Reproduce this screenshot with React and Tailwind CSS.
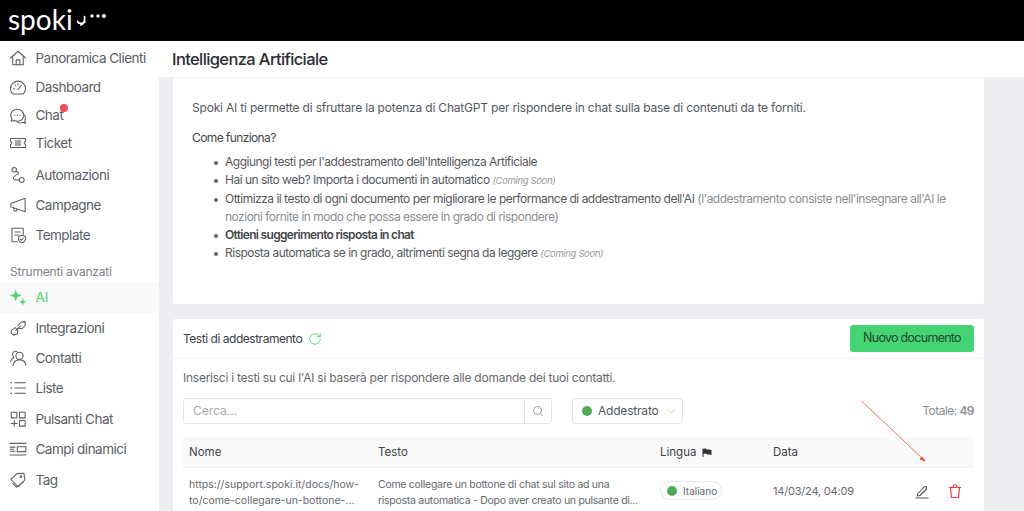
import React from "react";
import { Search, ChevronDown, RotateCw } from "lucide-react";

const S = ({ children, size = 18, sw = 1.4, fill = "none" }) => (
  <svg width={size} height={size} viewBox="0 0 24 24" fill={fill} stroke={fill === "none" ? "currentColor" : "none"} strokeWidth={sw} strokeLinecap="round" strokeLinejoin="round" className="shrink-0">
    {children}
  </svg>
);

const Icons = {
  home: () => <S><path d="M2 12 L12 3 L22 12" /><path d="M5 10 V21 H19 V10" /><path d="M9.5 21 V14.5 H14.5 V21" /></S>,
  gauge: () => <S><path d="M5 20 A10 10 0 1 1 19 20 Z" /><path d="M12 14 L16.5 8.5" /><path d="M6 13 H7.5 M8 8 L9 9 M12 6 V7.5" /></S>,
  chat: () => <S><path d="M11 3 C6 3 2.5 6.5 2.5 11 C2.5 13 3 14.500 4 16 L3 19 L7 18 C8.200 18.700 9.500 19 11 19 C16 19 19.500 15.500 19.500 11 C19.500 6.500 16 3 11 3 Z" /><path d="M20 10 C22 12 22.500 16 21 18 L22 21.500 L18 20.500 C16 21.500 13 21.500 11 20.500" /><path d="M7.500 11 H7.600 M11 11 H11.100 M14.500 11 H14.600" /></S>,
  ticket: () => <S><path d="M2 6 H22 V9.500 L20 12 L22 14.500 V18 H2 V14.500 L4 12 L2 9.500 Z" /><path d="M8 8 H16 V16 H8 Z" fill="currentColor" fillOpacity="0.55" stroke="none" /></S>,
  auto: () => <S><circle cx="7" cy="5" r="3" /><circle cx="17" cy="18.500" r="3.200" /><path d="M9.500 7 C13 9 14 10 11 11.500 C7 13 5 14 6 17 C7 19 10 19 13.800 18.500" /></S>,
  mega: () => <S><path d="M2.500 10 V14.500 L21.500 21 V3 Z" /><path d="M6 15.500 L7 20 H10.500 L10 17" /></S>,
  tpl: () => <S><path d="M11 21 H4 V3 H19 V11" /><path d="M8 8 H15 M8 12 H12.500" /><path d="M17 12 L22 14 V17.500 C22 20 19.500 21.500 17 22.500 C14.500 21.500 12.800 20 12.800 17.500 V14 Z" /><path d="M15 17.500 L16.500 19 L19.500 16" /></S>,
  sparks: () => <S fill="currentColor"><path d="M9 2 L11 8 L17 10 L11 12 L9 18 L7 12 L1 10 L7 8 Z" /><path d="M18.500 13 L19.700 17.300 L24 18.500 L19.700 19.700 L18.500 24 L17.300 19.700 L13 18.500 L17.300 17.300 Z" /></S>,
  link: () => <S><path d="M3 15.500 L8 11.500 L12 15 L11 20 L6 21.500 L3 19 Z" /><path d="M12 9 L16.500 4 L21.500 3.500 L21.500 9 L17.500 13 L13 12.500" /><path d="M9 15.500 L15.500 9" /></S>,
  users: () => <S><circle cx="14" cy="9" r="4.800" /><path d="M5.500 22 C6 17.500 9 14.500 14 14.500 C19 14.500 22 17.500 22.500 22" /><path d="M10.500 3.200 C9.500 2.800 8.500 2.800 7.500 3.200 C5 4 4 6.500 5 9 L6.500 11 C4 12.500 2.500 14.500 2 17" /></S>,
  list: () => <S><path d="M8 5 H22 M8 12 H22 M8 19 H22" /><path d="M2.800 5 H3 M2.800 12 H3 M2.800 19 H3" strokeWidth="2" /></S>,
  grid: () => <S><rect x="3" y="3" width="7.500" height="7.500" /><rect x="14" y="3" width="7.500" height="7.500" /><rect x="14" y="14" width="7.500" height="7.500" /><path d="M7 14 V22 M3 18 H11" /></S>,
  rows: () => <S><path d="M1.500 4.500 H22.500 M1.500 20 H22.500" /><rect x="11" y="9" width="11.500" height="6.500" /><path d="M1.500 9.500 H8 M1.500 12.200 H6 M1.500 15 H8" /></S>,
  tag: () => <S><path d="M2.500 11 L10.500 3.500 L20 3 L21 12 L12 21 Z" /><path d="M5 16.500 L10 21.500 L19 15" /><circle cx="16" cy="7.500" r="1" /></S>,
};

const top = [
  ["Panoramica Clienti", "home", "h-[30px]"],
  ["Dashboard", "gauge", "h-[29px]"],
  ["Chat", "chat", "h-[27px]", true],
  ["Ticket", "ticket", "h-[28px] mb-[3px]"],
  ["Automazioni", "auto", "h-[30px]"],
  ["Campagne", "mega", "h-[30px]"],
  ["Template", "tpl", "h-[30px]"],
];
const bottom = [
  ["Integrazioni", "link"],
  ["Contatti", "users"],
  ["Liste", "list"],
  ["Pulsanti Chat", "grid"],
  ["Campi dinamici", "rows"],
  ["Tag", "tag"],
];

function Item({ label, icon, cls = "h-[30.4px]", dot }) {
  const Icon = Icons[icon];
  return (
    <div className={`flex items-center pl-[9px] text-[#5a5e64] ${cls}`}>
      <Icon />
      <span className="relative ml-[8.500px] text-[13.5px] tracking-[-0.5px] whitespace-nowrap">
        {label}
        {dot && <span className="absolute right-[-5px] top-[-1px] w-2 h-2 rounded-full bg-[#f84a55]" />}
      </span>
    </div>
  );
}

function Bullet({ children }) {
  return (
    <li className="flex">
      <span className="w-[33px] shrink-0 flex justify-end pr-[7.5px] pt-[7.5px]">
        <span className="w-[4px] h-[4px] rounded-full bg-[#666]" />
      </span>
      <div>{children}</div>
    </li>
  );
}

const Soon = () => <i className="text-[9.5px] tracking-[-0.35px] text-[#999]"> (Coming Soon)</i>;

export default function App() {
  return (
    <div className="h-[511px] w-[1024px] overflow-hidden flex flex-col bg-[#eceef2] font-['Inter',sans-serif]">
      <header className="h-[41px] bg-black shrink-0 flex items-center pl-[8px] text-white">
        <span className="text-[28px] leading-none font-['Lato',sans-serif] mt-[-4px]">spoki</span>
        <svg width="32" height="14" viewBox="0 0 32 14" className="ml-[3px] mt-[-4px]">
          <path d="M1.500 9 C2 12 6 12 9 10 M8.500 4.500 C9 8 8 11.500 5 13" fill="none" stroke="#fff" strokeWidth="1.7" strokeLinecap="round" />
          <circle cx="16" cy="4" r="1.700" fill="#fff" />
          <circle cx="22" cy="4" r="1.700" fill="#fff" />
          <circle cx="28" cy="4" r="2" fill="#fff" />
        </svg>
      </header>
      <div className="flex flex-1 min-h-0">
        <aside className="w-[159px] shrink-0 bg-white pt-[2px]">
          {top.map(([l, I, c, d]) => <Item key={l} label={l} icon={I} cls={c} dot={d} />)}
          <div className="h-[32px] pl-[10px] pt-[14px] text-[12px] tracking-[-0.2px] leading-[15px] text-[#7c8085]">Strumenti avanzati</div>
          <div className="h-[30.5px] flex items-center pl-[9px] bg-[#f9f9f9] text-[#45d573]">
            <Icons.sparks />
            <span className="ml-[8.500px] text-[13.5px]">AI</span>
          </div>
          {bottom.map(([l, I]) => <Item key={l} label={l} icon={I} />)}
        </aside>
        <main className="flex-1 min-w-0 flex flex-col">
          <div className="h-[37px] shrink-0 bg-white pl-[13px] pt-[1px] flex items-center border-b border-[#f1f2f4]">
            <h1 className="text-[16.5px] font-medium tracking-[-0.62px] text-[#2a2d31]">Intelligenza Artificiale</h1>
          </div>
          <div className="pl-[14px] pr-[40px]">
            <section className="h-[226px] bg-white rounded-b-[3px] pl-[19px] pr-[20px] pt-[21px] text-[12px] tracking-[-0.19px] leading-[18px] text-[#55595e]">
              <p>Spoki AI ti permette di sfruttare la potenza di ChatGPT per rispondere in chat sulla base di contenuti da te forniti.</p>
              <p className="mt-[12px] text-[#44484d] tracking-[-0.6px]">Come funziona?</p>
              <ul className="mt-[6px] tracking-[-0.5px]">
                <Bullet>Aggiungi testi per l'addestramento dell'Intelligenza Artificiale</Bullet>
                <Bullet>Hai un sito web? Importa i documenti in automatico <Soon /></Bullet>
                <Bullet>
                  Ottimizza il testo di ogni documento per migliorare le performance di addestramento dell'AI{" "}
                  <span className="text-[#8b8e92]">(l'addestramento consiste nell'insegnare all'AI le</span>
                  <br />
                  <span className="text-[#8b8e92]">nozioni fornite in modo che possa essere in grado di rispondere)</span>
                </Bullet>
                <Bullet><b className="font-semibold tracking-[-0.68px] text-[#44484d]">Ottieni suggerimento risposta in chat</b></Bullet>
                <Bullet>Risposta automatica se in grado, altrimenti segna da leggere <Soon /></Bullet>
              </ul>
            </section>
            <section className="mt-[15px] bg-white rounded-t-[3px] h-[192px] overflow-hidden">
              <div className="h-[40px] flex items-center justify-between pl-[10px] pr-[10px] border-b border-[#f1f2f4]">
                <div className="flex items-center gap-[6px] text-[12px] tracking-[-0.47px] text-[#3c4045]">
                  Testi di addestramento
                  <RotateCw size={14} strokeWidth={1.5} className="text-[#45d573]" />
                </div>
                <button className="w-[124px] h-[27px] rounded-[3px] bg-[#45d373] text-[12.5px] tracking-[-0.72px] text-[#1f4a30]">Nuovo documento</button>
              </div>
              <div className="pl-[10px] pr-[10px]">
                <p className="mt-[10px] h-[18px] text-[12px] leading-[18px] tracking-[-0.25px] text-[#66696e]">Inserisci i testi su cui l'AI si baserà per rispondere alle domande dei tuoi contatti.</p>
                <div className="mt-[11px] h-[26px] flex items-center">
                  <div className="w-[369px] h-[26px] flex border border-[#e3e4e6] rounded-[3px]">
                    <span className="flex-1 pl-[9px] text-[12px] leading-[24px] text-[#a9acb0]">Cerca...</span>
                    <span className="w-[27px] border-l border-[#e3e4e6] flex items-center justify-center text-[#777]">
                      <Search size={12} strokeWidth={1.4} />
                    </span>
                  </div>
                  <div className="ml-[20px] w-[111px] h-[26px] border border-[#e3e4e6] rounded-[3px] flex items-center pl-[9px] text-[12px] tracking-[-0.2px] text-[#55595e]">
                    <span className="w-[10px] h-[10px] rounded-full bg-[#4fac55] mr-[6px]" />
                    Addestrato
                    <ChevronDown size={13} strokeWidth={1} className="ml-[6px] text-[#999]" />
                  </div>
                  <div className="ml-auto text-[12px] tracking-[-0.55px] text-[#8e9195]">Totale: <b className="font-semibold">49</b></div>
                </div>
                <div className="mt-[13px] h-[31px] bg-[#f9f9f9] flex items-center pt-[1px] text-[11.5px] text-[#3f4247] border-b border-[#f1f2f4]">
                  <span className="w-[195px] pl-[6px]">Nome</span>
                  <span className="w-[282px]">Testo</span>
                  <span className="w-[113px] flex items-center gap-[6px]">Lingua
                    <svg width="10" height="9" viewBox="0 0 10 9" className="text-[#333]"><path d="M1 0.500 V9" stroke="currentColor" strokeWidth="1" /><path d="M1 1 C3 0 4 0.500 5 1.500 C6.500 1.500 8 1.500 9.500 2 V7 C8 6.500 6 6.500 5 6.500 C4 5.500 3 5 1 6 Z" fill="currentColor" /></svg>
                  </span>
                  <span>Data</span>
                </div>
                <div className="flex items-start pt-[9px] h-[44px] text-[10.5px] leading-[16px] text-[#66696e]">
                  <div className="w-[195px] pl-[6px] pr-[2px]">https://support.spoki.it/docs/how-to/come-collegare-un-bottone-...</div>
                  <div className="w-[282px] whitespace-nowrap tracking-[-0.28px]">Come collegare un bottone di chat sul sito ad una<br />risposta automatica - Dopo aver creato un pulsante di...</div>
                  <div className="w-[113px] pt-[4px]">
                    <span className="inline-flex items-center h-[19px] w-[62px] border border-[#e5e6e8] rounded-full pl-[6px] gap-[6px] text-[10px]">
                      <span className="w-[10px] h-[10px] rounded-full bg-[#4fac55]" />Italiano
                    </span>
                  </div>
                  <div className="w-[142px] text-[11px] tracking-[-0.2px] pt-[6px]">14/03/24, 04:09</div>
                  <svg width="14" height="14" viewBox="0 0 14 14" className="mt-[8px] text-[#555]" fill="none" stroke="currentColor" strokeWidth="1.100" strokeLinejoin="round">
                    <path d="M2.500 9 L9 2 L11.500 1.500 L11.500 4 L5 10.500 L2.500 11 Z" />
                    <path d="M1 13 H13" strokeLinecap="round" />
                  </svg>
                  <svg width="14" height="15" viewBox="0 0 14 15" className="ml-[19px] mt-[7px] text-[#f5394a]" fill="none" stroke="currentColor" strokeWidth="1.200" strokeLinejoin="round">
                    <path d="M1.500 3.500 H12.500" strokeLinecap="round" />
                    <path d="M5 3.500 L5.500 1 H8.500 L9 3.500" />
                    <path d="M2.500 3.500 L3.500 13.500 H10.500 L11.500 3.500" />
                  </svg>
                </div>
              </div>
            </section>
          </div>
        </main>
      </div>
      <svg className="absolute left-[855px] top-[396px] pointer-events-none" width="76" height="70" viewBox="0 0 76 70">
        <path d="M6.500 5 L68 63" stroke="#f7705f" strokeWidth="1" />
        <path d="M70 65 L65 63 L67 61 Z" fill="#f4483c" stroke="#f4483c" />
      </svg>
    </div>
  );
}
